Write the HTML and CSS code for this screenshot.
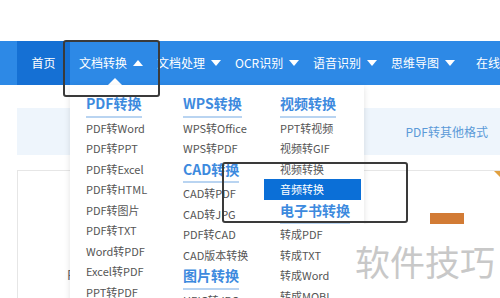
FILE: index.html
```html
<!DOCTYPE html>
<html lang="zh-CN">
<head>
    <meta charset="UTF-8">
    <meta name="viewport" content="width=device-width, initial-scale=1.0">
    <title>文档转换</title>
    <link rel="stylesheet" href="styles.css">
</head>
<body>
    <div class="top"></div>

    <nav class="nav">
        <a class="nav-item home">首页</a>
        <div class="nav-item open">
            文档转换<span class="arrow up"></span>
            <div class="menu">
                <div class="menu-col">
                    <div class="menu-title">PDF转换</div>
                    <a class="menu-link">PDF转Word</a>
                    <a class="menu-link">PDF转PPT</a>
                    <a class="menu-link">PDF转Excel</a>
                    <a class="menu-link">PDF转HTML</a>
                    <a class="menu-link">PDF转图片</a>
                    <a class="menu-link">PDF转TXT</a>
                    <a class="menu-link">Word转PDF</a>
                    <a class="menu-link">Excel转PDF</a>
                    <a class="menu-link">PPT转PDF</a>
                </div>
                <div class="menu-col">
                    <div class="menu-title">WPS转换</div>
                    <a class="menu-link">WPS转Office</a>
                    <a class="menu-link">WPS转PDF</a>
                    <div class="menu-title">CAD转换</div>
                    <a class="menu-link">CAD转PDF</a>
                    <a class="menu-link">CAD转JPG</a>
                    <a class="menu-link">PDF转CAD</a>
                    <a class="menu-link">CAD版本转换</a>
                    <div class="menu-title">图片转换</div>
                    <a class="menu-link">HEIC转JPG</a>
                </div>
                <div class="menu-col">
                    <div class="menu-title">视频转换</div>
                    <a class="menu-link">PPT转视频</a>
                    <a class="menu-link">视频转GIF</a>
                    <a class="menu-link">视频转换</a>
                    <a class="menu-link active">音频转换</a>
                    <div class="menu-title">电子书转换</div>
                    <a class="menu-link">转成PDF</a>
                    <a class="menu-link">转成TXT</a>
                    <a class="menu-link">转成Word</a>
                    <a class="menu-link">转成MOBI</a>
                </div>
            </div>
        </div>
        <a class="nav-item">文档处理<span class="arrow"></span></a>
        <a class="nav-item">OCR识别<span class="arrow"></span></a>
        <a class="nav-item">语音识别<span class="arrow"></span></a>
        <a class="nav-item">思维导图<span class="arrow"></span></a>
        <a class="nav-item last">在线PDF</a>
    </nav>

    <main class="main">
        <div class="tabs">
            <span class="tab">PDF转其他格式</span>
        </div>
        <div class="card">
            <span class="corner"></span>
            <div class="card-icon"></div>
            <p class="card-text">PDF转Word</p>
        </div>
    </main>

    <!-- annotation marks drawn over the screenshot -->
    <div class="mark mark-nav"></div>
    <div class="mark mark-item"></div>
    <div class="watermark">软件技巧</div>
</body>
</html>
```

FILE: styles.css
```css
body {
    margin: 0;
    width: 500px;
    height: 298px;
    overflow: hidden;
    position: relative;
    font-family: 'Noto Sans CJK SC', 'Liberation Sans', sans-serif;
    background-color: #fff;
}

a {
    text-decoration: none;
}

.top {
    height: 41px;
}

.nav {
    display: flex;
    height: 44px;
    padding-left: 17px;
    background-color: #2d89e6;
    color: #fff;
    font-size: 12px;
    line-height: 44px;
    white-space: nowrap;
}

.nav-item {
    position: relative;
    display: flex;
    align-items: center;
    width: 78px;
    flex-shrink: 0;
    padding-left: 9px;
    box-sizing: border-box;
    color: #fff;
}

.nav-item.home {
    width: 53px;
    padding-left: 0;
    justify-content: center;
    background-color: #1570d4;
}

.nav-item.last {
    margin-left: 7px;
}

.arrow {
    width: 0;
    height: 0;
    margin-left: 6px;
    border-left: 5px solid transparent;
    border-right: 5px solid transparent;
    border-top: 6px solid #fff;
}

.arrow.up {
    border-top: none;
    border-bottom: 6px solid #fff;
}

.open::after {
    content: '';
    position: absolute;
    left: 38px;
    bottom: 0;
    border-left: 7px solid transparent;
    border-right: 7px solid transparent;
    border-bottom: 7px solid #fff;
}

.menu {
    position: absolute;
    top: 44px;
    left: 0;
    z-index: 2;
    display: flex;
    width: 294px;
    height: 240px;
    padding-top: 8px;
    box-sizing: border-box;
    background-color: #fff;
    box-shadow: 0 2px 6px rgba(0, 0, 0, 0.12);
    line-height: normal;
}

.menu-col {
    display: flex;
    flex-direction: column;
    align-items: flex-start;
    width: 97px;
}

.menu-title {
    margin-left: 16px;
    padding-bottom: 1.5px;
    border-bottom: 2px solid #b9d4f1;
    color: #3d8ade;
    font-size: 14px;
    font-weight: bold;
    line-height: 21px;
}

.menu-link {
    align-self: stretch;
    padding-left: 16px;
    color: #555;
    font-size: 11px;
    line-height: 20.5px;
}

.menu-link.active {
    background-color: #0b6fd7;
    color: #fff;
}

.main {
    padding: 23px 0 0 17px;
}

.tabs {
    display: flex;
    justify-content: flex-end;
    align-items: center;
    height: 47px;
    padding-right: 12px;
    background-color: #eef5fc;
}

.tab {
    color: #5b9ad8;
    font-size: 12px;
}

.card {
    position: relative;
    height: 200px;
    margin-top: 15px;
    border: 1px solid #e6e6e6;
    border-right: none;
}

.corner {
    position: absolute;
    top: 0;
    right: 0;
    border-left: 6px solid transparent;
    border-top: 6px solid #e0a040;
}

.card-icon {
    width: 34px;
    height: 20px;
    margin: 42px 0 0 412px;
    background-color: #d27b35;
}

.card-text {
    margin: 32px 0 0 49px;
    color: #666;
    font-size: 13px;
}

.mark {
    position: absolute;
    z-index: 3;
    border: 2px solid #3a3a3a;
    border-radius: 3px;
}

.mark-nav {
    left: 63px;
    top: 40px;
    width: 93px;
    height: 53px;
}

.mark-item {
    left: 222px;
    top: 162px;
    width: 182px;
    height: 57px;
}

.watermark {
    position: absolute;
    z-index: 4;
    left: 348px;
    top: 224px;
    right: 0;
    bottom: 0;
    padding-left: 7px;
    background-color: #fff;
    color: #c8c8c8;
    font-size: 35px;
    line-height: 74px;
    white-space: nowrap;
}
```
